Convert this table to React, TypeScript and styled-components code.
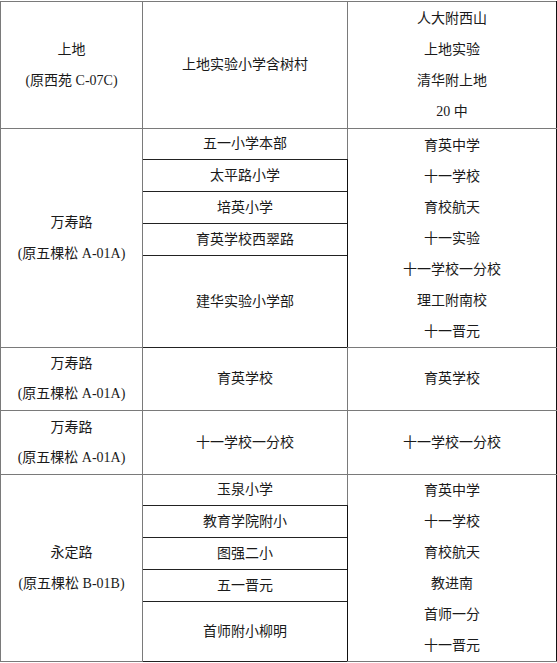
import styled, { createGlobalStyle } from "styled-components";

const GlobalStyle = createGlobalStyle`
  html, body {
    margin: 0;
    padding: 0;
    background: #ffffff;
  }
  body {
    font-family: "Liberation Serif", "Noto Sans CJK SC", serif;
    color: #1a1a1a;
  }
`;

const Page = styled.div`
  padding-top: 1px;
`;

const Table = styled.table`
  width: 556px;
  table-layout: fixed;
  border-collapse: collapse;
  font-size: 14px;
  line-height: 30px;
`;

const Row = styled.tr<{ $h: number }>`
  height: ${(p) => p.$h}px;
`;

// $dark: black line (used on the third column), $sub: black line between sub rows
const Cell = styled.td<{ $dark?: boolean; $sub?: boolean }>`
  padding: 0;
  text-align: center;
  vertical-align: middle;
  border: 1px solid #7a7a7a;
  ${(p) =>
    p.$dark &&
    `
    border-left-color: #111;
    border-right-color: #111;
  `}
  ${(p) =>
    p.$sub &&
    `
    border-top-color: #222;
    border-bottom-color: #222;
  `}
`;

const Line = styled.div<{ $tall?: boolean }>`
  white-space: nowrap;
  line-height: ${(p) => (p.$tall ? "31px" : "30px")};
`;

const Lines = ({ items, tall }: { items: string[]; tall?: boolean }) => (
  <>
    {items.map((t, i) => (
      <Line key={i} $tall={tall}>
        {t}
      </Line>
    ))}
  </>
);

const wanshou = ["万寿路", "(原五棵松 A-01A)"];

export default function App() {
  return (
    <Page>
      <GlobalStyle />
      <Table>
        <colgroup>
          <col style={{ width: 142 }} />
          <col style={{ width: 205 }} />
          <col style={{ width: 209 }} />
        </colgroup>
        <tbody>
          <Row $h={127}>
            <Cell>
              <Lines items={["上地", "(原西苑 C-07C)"]} tall />
            </Cell>
            <Cell>上地实验小学含树村</Cell>
            <Cell $dark>
              <Lines
                items={["人大附西山", "上地实验", "清华附上地", "20 中"]}
                tall
              />
            </Cell>
          </Row>

          <Row $h={31}>
            <Cell rowSpan={5}>
              <Lines items={wanshou} tall />
            </Cell>
            <Cell $sub>五一小学本部</Cell>
            <Cell $dark rowSpan={5}>
              <Lines
                items={[
                  "育英中学",
                  "十一学校",
                  "育校航天",
                  "十一实验",
                  "十一学校一分校",
                  "理工附南校",
                  "十一晋元",
                ]}
                tall
              />
            </Cell>
          </Row>
          <Row $h={32}>
            <Cell $sub>太平路小学</Cell>
          </Row>
          <Row $h={32}>
            <Cell $sub>培英小学</Cell>
          </Row>
          <Row $h={32}>
            <Cell $sub>育英学校西翠路</Cell>
          </Row>
          <Row $h={92}>
            <Cell $sub>建华实验小学部</Cell>
          </Row>

          <Row $h={63}>
            <Cell>
              <Lines items={wanshou} />
            </Cell>
            <Cell>育英学校</Cell>
            <Cell $dark>育英学校</Cell>
          </Row>

          <Row $h={64}>
            <Cell>
              <Lines items={wanshou} />
            </Cell>
            <Cell>十一学校一分校</Cell>
            <Cell $dark>十一学校一分校</Cell>
          </Row>

          <Row $h={31}>
            <Cell rowSpan={5}>
              <Lines items={["永定路", "(原五棵松 B-01B)"]} tall />
            </Cell>
            <Cell $sub>玉泉小学</Cell>
            <Cell $dark rowSpan={5}>
              <Lines
                items={[
                  "育英中学",
                  "十一学校",
                  "育校航天",
                  "教进南",
                  "首师一分",
                  "十一晋元",
                ]}
                tall
              />
            </Cell>
          </Row>
          <Row $h={32}>
            <Cell $sub>教育学院附小</Cell>
          </Row>
          <Row $h={32}>
            <Cell $sub>图强二小</Cell>
          </Row>
          <Row $h={32}>
            <Cell $sub>五一晋元</Cell>
          </Row>
          <Row $h={60}>
            <Cell $sub>首师附小柳明</Cell>
          </Row>
        </tbody>
      </Table>
    </Page>
  );
}
